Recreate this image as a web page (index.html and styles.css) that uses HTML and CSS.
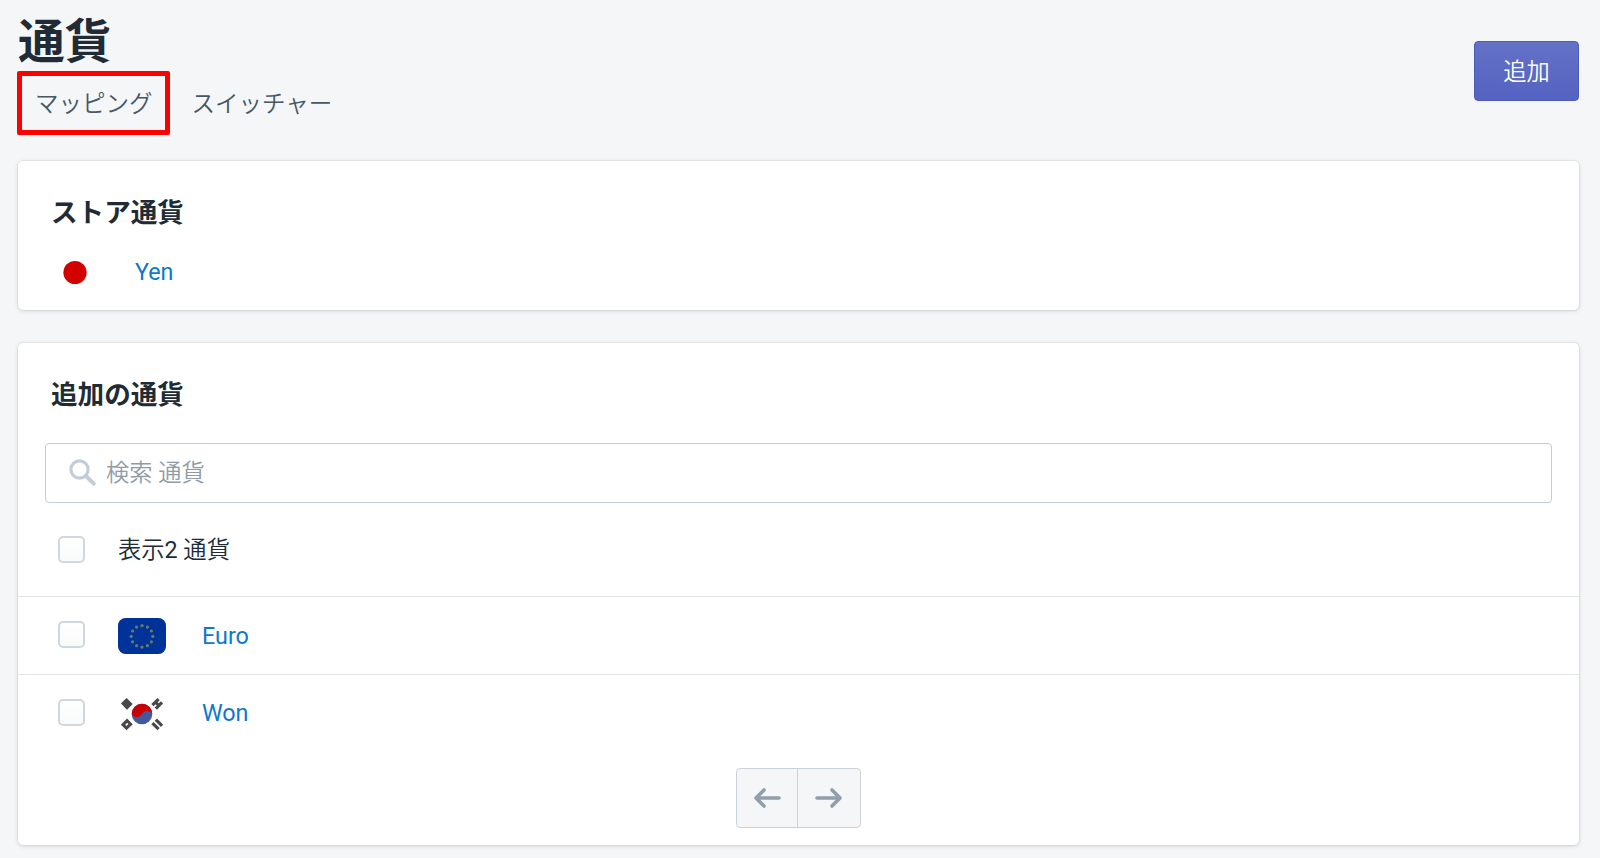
FILE: index.html
```
<!DOCTYPE html>
<html lang="ja">
<head>
<meta charset="utf-8">
<title>通貨</title>
<link rel="stylesheet" href="styles.css">
</head>
<body>
<main class="page">
  <header class="header">
    <div class="heading">
      <h1 class="title">通貨</h1>
      <nav class="tabs">
        <a class="tab tab-marked">マッピング</a>
        <a class="tab">スイッチャー</a>
      </nav>
    </div>
    <button class="add">追加</button>
  </header>

  <section class="card store">
    <h2 class="card-title">ストア通貨</h2>
    <div class="store-row">
      <svg class="flag" viewBox="0 0 48 36"><circle cx="24" cy="17.5" r="11.6" fill="#d30000"/></svg>
      <a class="link">Yen</a>
    </div>
  </section>

  <section class="card extra">
    <h2 class="card-title">追加の通貨</h2>
    <div class="search">
      <svg class="search-icon" viewBox="0 0 30 30" fill="none" stroke="#c4cdd5"><circle cx="11.5" cy="11.5" r="8.6" stroke-width="3.2"/><path d="M18 18l7.7 7.7" stroke-width="4" stroke-linecap="round"/></svg>
      <span class="placeholder">検索 通貨</span>
    </div>
    <div class="row row-head">
      <span class="check"></span>
      <span class="count">表示<span class="num">2</span> 通貨</span>
    </div>
    <div class="row row-euro">
      <span class="check"></span>
      <svg class="flag" viewBox="0 0 48 36">
        <rect width="48" height="36" rx="7.5" fill="#039"/>
        <g fill="#697b67">
          <circle cx="24" cy="7.7" r="1.6"/><circle cx="29.4" cy="9.1" r="1.6"/><circle cx="33.4" cy="13" r="1.6"/><circle cx="34.8" cy="18.4" r="1.6"/><circle cx="33.4" cy="23.8" r="1.6"/><circle cx="29.4" cy="27.7" r="1.6"/><circle cx="24" cy="29.1" r="1.6"/><circle cx="18.6" cy="27.7" r="1.6"/><circle cx="14.6" cy="23.8" r="1.6"/><circle cx="13.2" cy="18.4" r="1.6"/><circle cx="14.6" cy="13" r="1.6"/><circle cx="18.6" cy="9.1" r="1.6"/>
        </g>
      </svg>
      <a class="link">Euro</a>
    </div>
    <div class="row row-won">
      <span class="check"></span>
      <svg class="flag" viewBox="0 0 48 36">
        <g stroke="#484848" stroke-width="2.9">
          <g transform="translate(8.8 7.8) rotate(-45)"><path d="M-4 -2.9h8M-4 0h8M-4 2.9h8"/></g>
          <g transform="translate(39.2 7.8) rotate(45)"><path d="M-4 -2.9h3.2M.8 -2.9H4M-4 0h8M-4 2.9h3.2M.8 2.9H4"/></g>
          <g transform="translate(8.8 28.4) rotate(45)"><path d="M-4 -2.9h8M-4 0h3.2M.8 0H4M-4 2.9h8"/></g>
          <g transform="translate(39.2 28.4) rotate(-45)"><path d="M-4 -2.9h3.2M.8 -2.9H4M-4 0h3.2M.8 0H4M-4 2.9h3.2M.8 2.9H4"/></g>
        </g>
        <g transform="translate(24 18)">
          <circle r="10.3" fill="#415a99"/>
          <path d="M-10.3 0A10.3 10.3 0 0 1 10.3 0A6 6 0 0 0 0 0A6 6 0 0 1 -10.3 0Z" fill="#cb0000"/>
        </g>
      </svg>
      <a class="link">Won</a>
    </div>
    <div class="pager">
      <button class="page-btn prev"><svg class="arrow" viewBox="0 0 28 22"><path d="M26 11H3M11 3L3 11L11 19"/></svg></button>
      <button class="page-btn next"><svg class="arrow" viewBox="0 0 28 22"><path d="M2 11H25M17 3L25 11L17 19"/></svg></button>
    </div>
  </section>
</main>
</body>
</html>
```
FILE: styles.css
```
*, *::after { box-sizing: border-box; }
body {
  margin: 0;
  background: #f4f6f8;
  color: #212b36;
  font-family: Roboto, "Noto Sans CJK JP", sans-serif;
  font-size: 23.3px;
  line-height: 32px;
}
.page { height: 858px; padding: 0 21px 0 18px; overflow: hidden; }
.header { display: flex; justify-content: space-between; height: 161px; }
.title { margin: 0; padding-top: 14px; font-size: 46.8px; line-height: 56px; font-weight: 700; }
.tabs { display: flex; gap: 39px; padding: 18px 0 0 17px; }
.tab { position: relative; color: #485664; font-size: 23.5px; font-weight: 350; white-space: nowrap; }
.tab-marked::after {
  content: "";
  position: absolute;
  left: -18px;
  top: -17px;
  width: 153px;
  height: 64px;
  border: 5px solid #f00;
  border-radius: 2px;
}
.add {
  width: 105px;
  height: 60px;
  margin-top: 41px;
  padding: 2px 0 0;
  border: 1px solid #4b5abb;
  border-radius: 4px;
  background: linear-gradient(#6371c7, #5563c1);
  color: #fff;
  font: inherit;
  font-weight: 350;
}
.card {
  background: #fff;
  border-radius: 5px;
  box-shadow: 0 0 0 1px rgba(63, 63, 68, .05), 0 1px 4px rgba(63, 63, 68, .18);
}
.card-title { margin: 0; padding-left: 33px; font-size: 26.6px; line-height: 36px; font-weight: 700; }
.store { height: 149px; margin-bottom: 33px; padding-top: 34px; }
.store-row { display: flex; align-items: center; gap: 37px; height: 36px; margin-top: 23px; padding-left: 33px; }
.flag { width: 48px; height: 36px; flex: none; }
.link { color: #0e78cb; }
.store-row .flag { margin-top: 1px; }
.store-row .link { margin-left: -1px; }
.extra { height: 502px; padding-top: 34px; }
.search {
  display: flex;
  align-items: center;
  height: 60px;
  margin: 30px 27px 0;
  padding-left: 22px;
  border: 1px solid #c4cdd5;
  border-radius: 4px;
  color: #8f9ca8;
  font-weight: 350;
}
.search-icon { width: 30px; height: 30px; margin-right: 8px; }
.row { display: flex; align-items: center; padding-left: 40px; }
.row .link { margin-left: 36px; }
.row-head { height: 94px; border-bottom: 1px solid #dfe3e8; }
.row-euro { height: 78px; border-bottom: 1px solid #dfe3e8; }
.row-euro .check { margin-top: -2px; }
.row-won { height: 76px; }
.row-won .flag { margin-top: 2px; }
.row-won .check { margin-top: -2px; }
.check {
  width: 27px;
  height: 27px;
  margin-right: 33px;
  border: 2px solid #cfd7df;
  border-radius: 5px;
  background: linear-gradient(#fff, #f9fafb);
}
.count { font-weight: 350; }
.num { font-weight: 400; }
.pager { display: flex; margin: 17px 0 0 718px; }
.page-btn {
  display: flex;
  align-items: center;
  justify-content: center;
  height: 60px;
  padding: 0;
  border: 1px solid #c9d2da;
  background: #f4f6f8;
}
.prev { width: 62px; border-radius: 4px 0 0 4px; }
.next { width: 64px; margin-left: -1px; border-radius: 0 4px 4px 0; }
.arrow { width: 28px; height: 22px; fill: none; stroke: #919eab; stroke-width: 3.6; stroke-linecap: round; stroke-linejoin: round; }
```
